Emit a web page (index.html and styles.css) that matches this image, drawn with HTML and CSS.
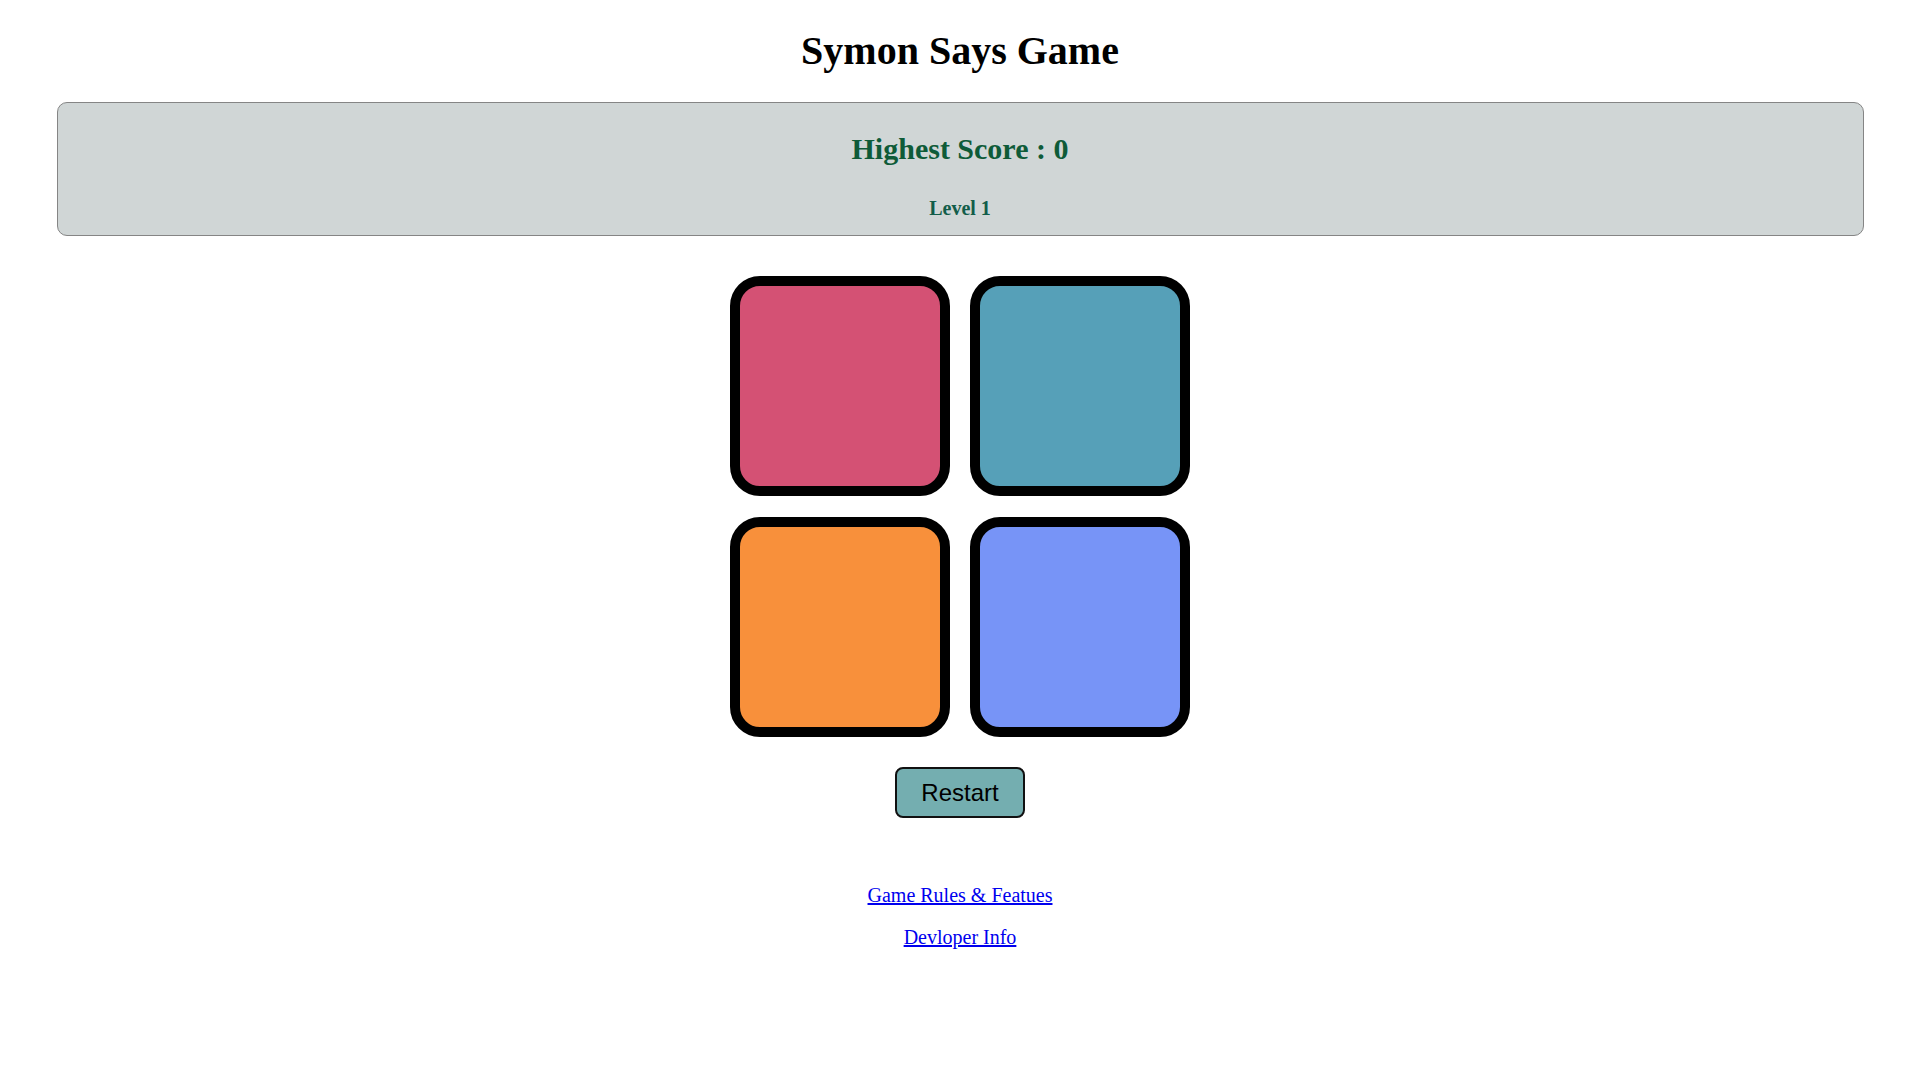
FILE: index.html
```html
<!DOCTYPE html>
<html lang="en">
<head>
<meta charset="utf-8">
<title>Symon Says Game</title>
<link rel="stylesheet" href="styles.css">
</head>
<body>
<h1 class="title">Symon Says Game</h1>
<div class="panel">
  <h2 class="score">Highest Score : 0</h2>
  <h3 class="level">Level 1</h3>
</div>
<div class="board">
  <div class="btn red"></div>
  <div class="btn teal"></div>
  <div class="btn orange"></div>
  <div class="btn blue"></div>
</div>
<div class="actions">
  <button class="restart">Restart</button>
</div>
<div class="links">
  <a href="#" class="link">Game Rules &amp; Featues</a>
  <a href="#" class="link">Devloper Info</a>
</div>
</body>
</html>
```
FILE: styles.css
```css
html, body {
  margin: 0;
  padding: 0;
  background: #ffffff;
}
body {
  font-family: "Liberation Serif", "Times New Roman", serif;
  display: flex;
  flex-direction: column;
  align-items: center;
}
.title {
  margin: 27.5px 0 0 0;
  font-size: 40px;
  line-height: 46px;
  font-weight: bold;
  color: #000;
  text-align: center;
}
.panel {
  box-sizing: border-box;
  width: 1807px;
  margin-top: 28px;
  height: 134px;
  border: 1px solid #858585;
  border-radius: 10px;
  background: #d0d6d6;
  padding: 29px 0 16px 0;
  display: flex;
  flex-direction: column;
  align-items: center;
}
.score {
  margin: 0;
  font-size: 30px;
  line-height: 34px;
  color: #0e5b38;
}
.level {
  margin: 31px 0 0 0;
  font-size: 20px;
  line-height: 22px;
  color: #125d4a;
}
.board {
  margin-top: 40px;
  display: grid;
  grid-template-columns: 220px 220px;
  grid-auto-rows: 220px;
  column-gap: 20px;
  row-gap: 21px;
}
.btn {
  box-sizing: border-box;
  border: 10px solid #000;
  border-radius: 30px;
}
.red { background: #d45174; }
.teal { background: #56a0b8; }
.orange { background: #f8903b; }
.blue { background: #7794f7; }
.actions {
  margin-top: 30px;
}
.restart {
  box-sizing: border-box;
  height: 51px;
  padding: 10px 24px;
  font-family: "Liberation Sans", Arial, sans-serif;
  font-size: 24px;
  line-height: 27px;
  color: #000;
  background: #74aeb0;
  border: 2px solid #111;
  border-radius: 8px;
}
.links {
  margin-top: 66.75px;
  display: flex;
  flex-direction: column;
  align-items: center;
  row-gap: 19px;
}
.link {
  font-size: 20px;
  line-height: 23px;
  color: #0000ee;
  text-decoration: underline;
}
```
